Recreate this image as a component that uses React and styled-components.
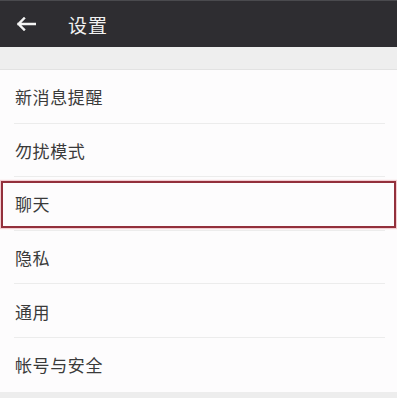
import React from "react";
import styled, { createGlobalStyle } from "styled-components";

const GlobalStyle = createGlobalStyle`
  html, body {
    margin: 0;
    padding: 0;
    background: #eeeeee;
  }
  body {
    font-family: "Noto Sans CJK SC", "Liberation Sans", sans-serif;
  }
`;

const items = ["新消息提醒", "勿扰模式", "聊天", "隐私", "通用", "帐号与安全"];

const App = () => {
  return (
    <Page>
      <GlobalStyle />
      <Header>
        <BackIcon viewBox="0 0 20 14">
          <path
            d="M19 7H2.5M8 1.5L2.5 7 8 12.5"
            fill="none"
            stroke="#f4f4f4"
            strokeWidth="2.4"
            strokeLinecap="square"
          />
        </BackIcon>
        <Title>设置</Title>
      </Header>
      <Spacer />
      <List>
        {items.map((label, i) => (
          <Row key={label} $last={i === items.length - 1}>
            <Label>{label}</Label>
            {label === "聊天" && <Highlight />}
          </Row>
        ))}
      </List>
    </Page>
  );
};

export default App;

const Page = styled.div`
  width: 397px;
  height: 398px;
  overflow: hidden;
  background: #ededed;
`;

const Header = styled.div`
  height: 47px;
  background: #2e2d31;
  border-top: 1px solid #4a4a4e;
  box-sizing: border-box;
  display: flex;
  align-items: center;
  padding-left: 16px;
`;

const BackIcon = styled.svg`
  width: 20px;
  height: 14px;
  margin-right: 32px;
`;

const Title = styled.span`
  color: #f2f2f2;
  font-size: 19px;
  letter-spacing: 1px;
`;

const Spacer = styled.div`
  height: 23px;
  background: #eeeeee;
  border-bottom: 1px solid #e2e2e2;
  box-sizing: border-box;
`;

const List = styled.div`
  background: #fdfcfd;
  display: flex;
  flex-direction: column;
`;

const Row = styled.div`
  position: relative;
  height: 53.6px;
  display: flex;
  align-items: center;
  padding-left: 15px;

  &::after {
    content: "";
    display: ${(p) => (p.$last ? "none" : "block")};
    position: absolute;
    left: 14px;
    right: 12px;
    bottom: 0;
    height: 1px;
    background: #ececec;
  }
`;

const Label = styled.span`
  color: #3a3a3a;
  font-size: 17px;
  letter-spacing: 0.6px;
`;

const Highlight = styled.div`
  position: absolute;
  left: 1px;
  right: 1px;
  top: 4px;
  bottom: 3px;
  border: 2px solid #93303c;
  box-shadow: 0 0 1px 1px rgba(220, 120, 130, 0.35);
  z-index: 1;
`;
